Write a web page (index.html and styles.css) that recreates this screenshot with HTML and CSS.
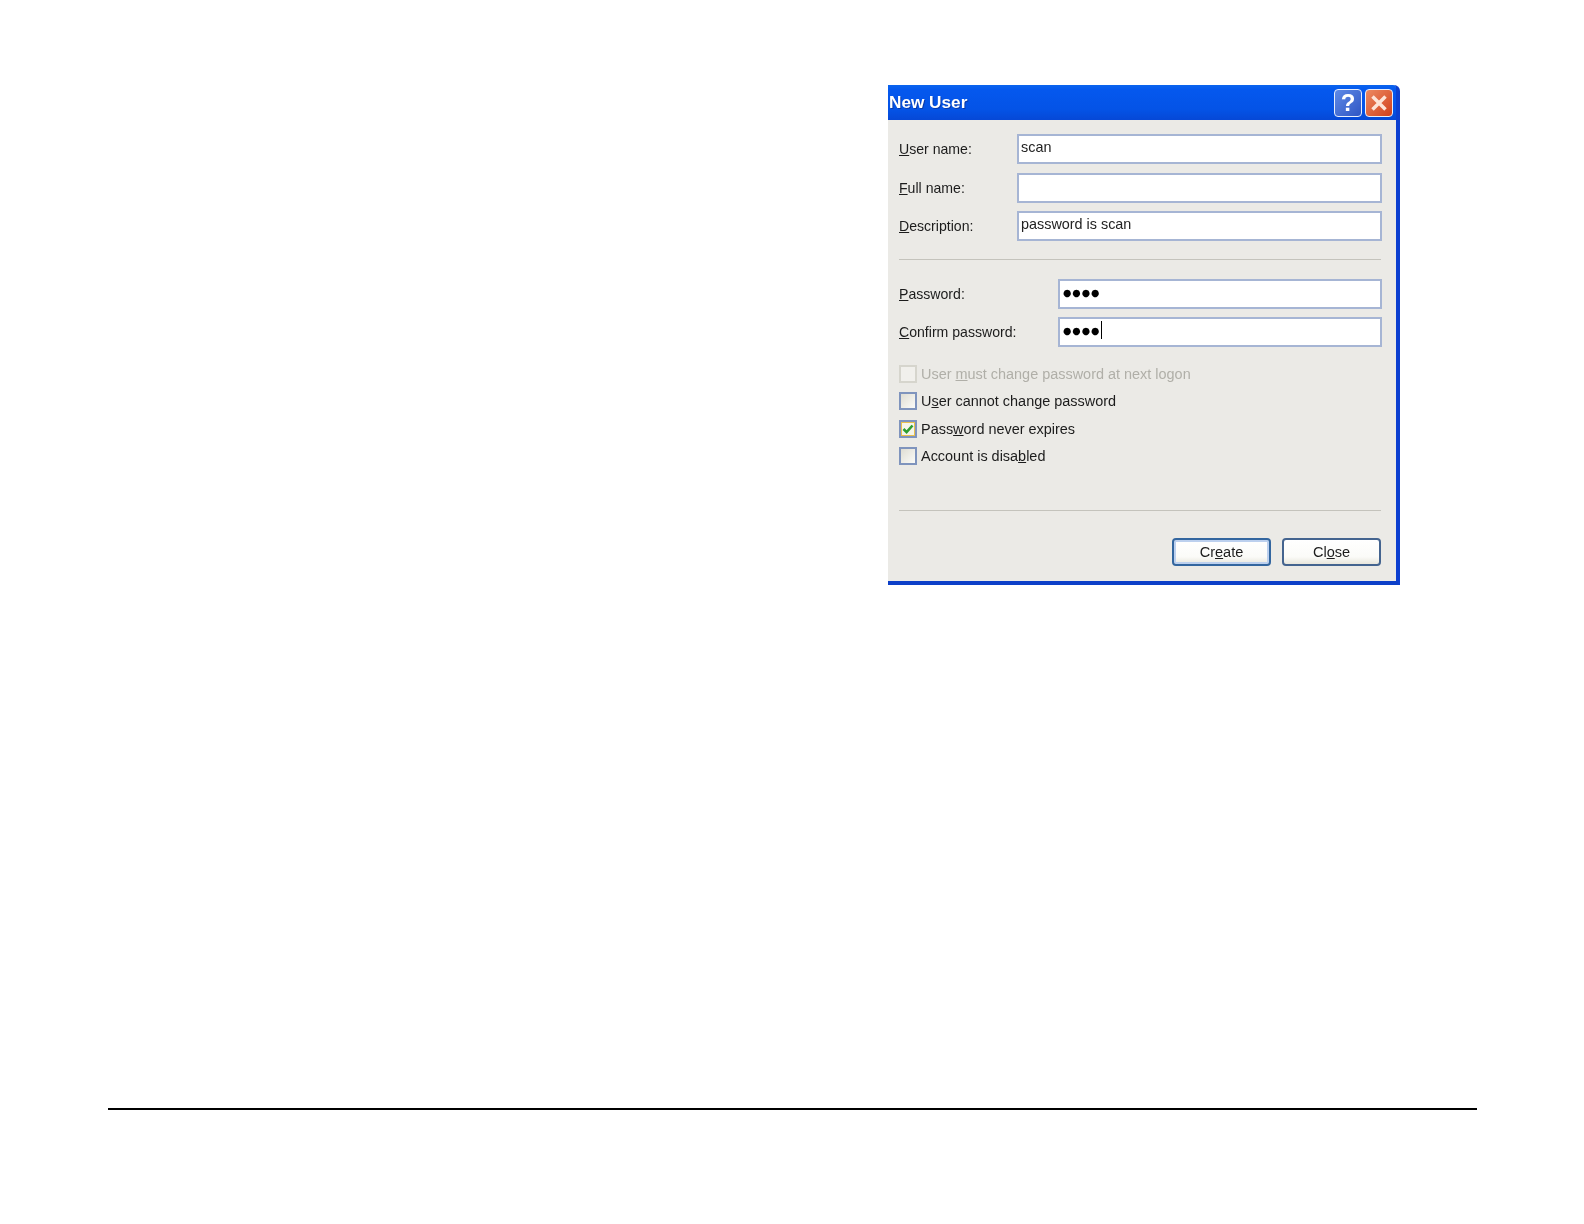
FILE: index.html
```html
<!DOCTYPE html>
<html lang="en">
<head>
<meta charset="utf-8">
<title>New User</title>
<link rel="stylesheet" href="styles.css">
</head>
<body>
<div class="dialog">
  <div class="titlebar">
    <span class="title">New User</span>
    <div class="caption-buttons">
      <div class="cap cap-help">?</div>
      <div class="cap cap-close">
        <svg width="20" height="20" viewBox="0 0 20 20"><path d="M3.5 3.5L16.5 16.5M16.5 3.5L3.5 16.5" stroke="#fde4d8" stroke-width="3.5" fill="none"/></svg>
      </div>
    </div>
  </div>
  <div class="content">
    <div class="row"><label class="label label-wide"><u>U</u>ser name:</label><div class="field">scan</div></div>
    <div class="row row-gap9"><label class="label label-wide"><u>F</u>ull name:</label><div class="field"></div></div>
    <div class="row row-gap8"><label class="label label-wide"><u>D</u>escription:</label><div class="field">password is scan</div></div>
    <div class="sep sep-first"></div>
    <div class="row row-gap19"><label class="label label-long"><u>P</u>assword:</label><div class="field dots">●●●●</div></div>
    <div class="row row-gap8"><label class="label label-long"><u>C</u>onfirm password:</label><div class="field dots">●●●●<span class="caret"></span></div></div>
    <div class="checks">
      <div class="check check-disabled"><span class="box"></span><span>User <u>m</u>ust change password at next logon</span></div>
      <div class="check"><span class="box"></span><span>U<u>s</u>er cannot change password</span></div>
      <div class="check"><span class="box box-on"><svg width="12" height="12" viewBox="0 0 12 12"><path d="M1.5 6L4.6 9.2L10.5 2.5" stroke="#2f9e2f" stroke-width="2.6" fill="none"/></svg></span><span>Pass<u>w</u>ord never expires</span></div>
      <div class="check"><span class="box"></span><span>Account is disa<u>b</u>led</span></div>
    </div>
    <div class="sep sep-second"></div>
    <div class="buttons">
      <div class="btn btn-default">Cr<u>e</u>ate</div>
      <div class="btn">Cl<u>o</u>se</div>
    </div>
  </div>
</div>
<div class="rule"></div>
</body>
</html>
```
FILE: styles.css
```css
html, body { margin: 0; padding: 0; background: #fff; }
body { width: 1584px; height: 1224px; overflow: hidden; font-family: "Liberation Sans", Arial, sans-serif; color: #1c1c1c; }
.dialog { box-sizing: border-box; width: 512px; height: 500px; margin: 85px 0 0 888px; background: #ebeae6; border-right: 4px solid #0c3fd0; border-bottom: 4px solid #0c3fc8; border-top-right-radius: 6px; filter: blur(0.35px); }
.titlebar { height: 35px; display: flex; justify-content: space-between; align-items: center; background: linear-gradient(#0a64ee 0, #0558ee 14%, #0453e6 70%, #0648d6 100%); border-top-right-radius: 3px; }
.title { margin-left: 1px; font-size: 17.2px; font-weight: bold; color: #fff; text-shadow: 1px 1px 0 #0a3aa8; }
.caption-buttons { display: flex; gap: 3px; padding-right: 3px; }
.cap { box-sizing: border-box; width: 28px; height: 28px; border: 1px solid #e8eefc; border-radius: 4px; display: flex; align-items: center; justify-content: center; }
.cap-help { background: linear-gradient(135deg, #5f8ae6, #2f56c4); color: #fff; font-size: 24px; font-weight: bold; }
.cap-close { background: linear-gradient(135deg, #ec8a62, #d2401c); }
.content { padding: 14px 14px 0 11px; display: flex; flex-direction: column; }
.row { display: flex; align-items: center; height: 30px; font-size: 14.1px; }
.row-gap9 { margin-top: 9px; }
.row-gap8 { margin-top: 8px; }
.row-gap19 { margin-top: 19px; }
.label { flex: none; }
.label-wide { width: 118px; }
.label-long { width: 159px; }
.field { box-sizing: border-box; flex: 1; height: 30px; padding: 0 2px 4px; border: 2px solid #a6b5d4; background: #fff; display: flex; align-items: center; font-size: 14.4px; color: #222; }
.dots { padding-left: 3px; font-family: "DejaVu Sans", sans-serif; font-size: 9.6px; letter-spacing: 1px; color: #000; }
.caret { display: inline-block; width: 1px; height: 18px; background: #000; margin-left: 0; }
.sep { height: 1px; background: #c4c3bc; margin-right: 1px; flex: none; }
.sep-first { margin-top: 18px; }
.sep-second { margin-top: 45px; }
.checks { display: flex; flex-direction: column; gap: 9.3px; margin-top: 18px; }
.check { display: flex; align-items: center; gap: 4px; height: 18px; font-size: 14.45px; }
.check-disabled { color: #b0afa8; }
.box { box-sizing: border-box; width: 18px; height: 18px; border: 2px solid #7f94bd; background: linear-gradient(135deg, #dfddd3, #fbfbf8); display: flex; align-items: center; justify-content: center; flex: none; }
.check-disabled .box { border-color: #d6d5cd; background: #f1f0ec; }
.box-on { background: #e9c04e; }
.box-on svg { background: #f6f5ea; }
.buttons { display: flex; justify-content: flex-end; gap: 11px; margin-top: 27px; margin-right: 1px; }
.btn { box-sizing: border-box; width: 99px; height: 28px; border: 2px solid #44648f; border-radius: 4px; background: linear-gradient(#fff 0, #fbfbf8 70%, #e8e6dc 100%); display: flex; align-items: center; justify-content: center; font-size: 14.55px; }
.btn-default { border-color: #33669f; box-shadow: inset 0 0 0 2px #bcd0ee; }
.rule { height: 2px; margin: 523px 107px 0 108px; background: #000; }
```
